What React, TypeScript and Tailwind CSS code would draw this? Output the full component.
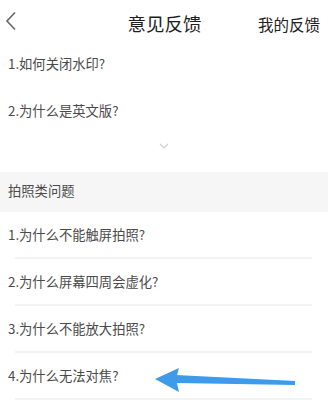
import React from "react";

const font = { fontFamily: '"Noto Sans CJK SC", "Noto Sans", sans-serif' };

function Row({ text, divider }: { text: string; divider?: boolean }) {
  return (
    <div className="h-[47px] flex flex-col">
      <div className="flex-1 flex items-center pl-[8px] text-[13.3px] text-[#4a4a4a]">{text}</div>
      {divider && <div className="mx-[15px] w-[297px] h-[2px] bg-[#f3f3f3]" />}
    </div>
  );
}

export default function App() {
  return (
    <div className="relative w-[328px] h-[415px] bg-white overflow-hidden" style={font}>
      <div className="h-[40px] relative flex items-start pt-[10px]">
        <svg className="absolute left-[4px] top-[11px]" width="14" height="20" viewBox="0 0 14 20">
          <path d="M11 1.5 L3 10 L11 18.5" fill="none" stroke="#666" strokeWidth="1.6" />
        </svg>
        <div className="absolute left-0 right-0 top-[10px] text-center text-[18.5px] leading-[26px] text-[#1e1e1e] pl-[1px]">意见反馈</div>
        <div className="absolute right-[8px] top-[12px] text-[15.5px] leading-[24px] text-[#222]">我的反馈</div>
      </div>
      <Row text="1.如何关闭水印?" />
      <Row text="2.为什么是英文版?" />
      <div className="h-[38px] flex justify-center pt-[9px]">
        <svg width="10" height="7" viewBox="0 0 10 7">
          <path d="M1 1 L5 5 L9 1" fill="none" stroke="#d0d0d0" strokeWidth="1.2" />
        </svg>
      </div>
      <div className="h-[40px] bg-[#f6f6f6] flex items-center pl-[8px] text-[13.3px] text-[#4a4a4a] pb-[3px]">拍照类问题</div>
      <Row text="1.为什么不能触屏拍照?" divider />
      <Row text="2.为什么屏幕四周会虚化?" divider />
      <Row text="3.为什么不能放大拍照?" divider />
      <Row text="4.为什么无法对焦?" divider />
      <svg className="absolute left-0 top-0" width="328" height="415" viewBox="0 0 328 415">
        <path d="M176 375 L295 381 L295 385 L176 383 Z" fill="#3d9be9" />
        <path d="M155 379 L179 368 L176 379 L179 392 Z" fill="#3d9be9" />
      </svg>
    </div>
  );
}
